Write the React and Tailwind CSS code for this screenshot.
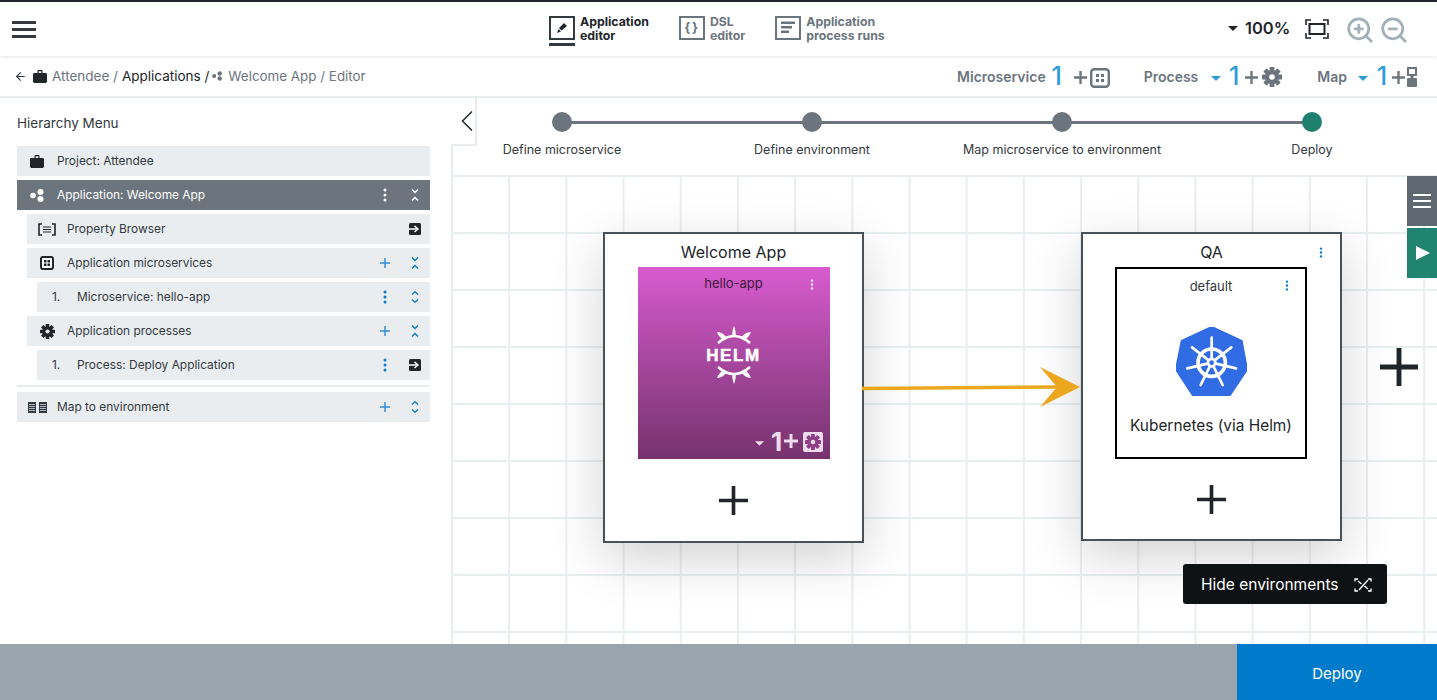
import { ArrowLeft, ZoomIn, ZoomOut } from "lucide-react";

const Caret = ({ className = "" }) => (
  <svg viewBox="0 0 10 5" className={`w-[10px] h-[5px] ${className}`} fill="currentColor">
    <path d="M0 0h10L5 5z" />
  </svg>
);

const Dots = ({ className = "" }) => (
  <svg viewBox="0 0 4 14" className={`w-[4px] h-[14px] ${className}`} fill="currentColor">
    <circle cx="2" cy="2" r="1.5" />
    <circle cx="2" cy="7" r="1.5" />
    <circle cx="2" cy="12" r="1.5" />
  </svg>
);

const Collapse = ({ className = "" }) => (
  <svg viewBox="0 0 8 12" className={`w-[8px] h-[12px] ${className}`} fill="none" stroke="currentColor" strokeWidth="1.4">
    <path d="M1 .5 4 3.5 7 .5M1 11.5 4 8.5 7 11.5" />
  </svg>
);

const Expand = ({ className = "" }) => (
  <svg viewBox="0 0 8 12" className={`w-[8px] h-[12px] ${className}`} fill="none" stroke="currentColor" strokeWidth="1.4">
    <path d="M1 3.5 4 .8 7 3.5M1 8.5 4 11.2 7 8.5" />
  </svg>
);

const Plus = ({ size = 12, width = 2, className = "" }) => (
  <svg viewBox="0 0 28 28" width={size} height={size} className={className} fill="none" stroke="currentColor" strokeWidth={width}>
    <path d="M14 0v28M0 14h28" />
  </svg>
);

// square-toothed cog, the icon sets only have rounder ones
const Gear = ({ size = 14, className = "" }) => (
  <svg viewBox="0 0 20 20" width={size} height={size} className={className} fill="currentColor" fillRule="evenodd">
    {[0, 45, 90, 135].map((a) => (
      <rect key={a} x="7.6" y="0" width="4.8" height="20" rx="0.6" transform={`rotate(${a} 10 10)`} />
    ))}
    <path d="M10 3a7 7 0 1 0 0 14 7 7 0 0 0 0-14Zm0 4.2a2.8 2.8 0 1 1 0 5.6 2.8 2.8 0 0 1 0-5.6Z" />
    <circle cx="10" cy="10" r="2.8" fill="var(--gear-hole, #fff)" />
  </svg>
);

const Briefcase = ({ className = "" }) => (
  <svg viewBox="0 0 14 13" className={`w-[14px] h-[13px] ${className}`} fill="currentColor">
    <path d="M4.5 3V1.2C4.5.5 5 0 5.7 0h2.6c.7 0 1.2.5 1.2 1.2V3H8.3V1.3H5.7V3Z" />
    <rect x="0" y="3" width="14" height="10" rx="1.4" />
  </svg>
);

const GoIcon = () => (
  <svg viewBox="0 0 12 12" className="w-[12px] h-[12px]">
    <rect width="12" height="12" rx="1.5" fill="#212529" />
    <path d="M0 6h7.5M5.5 3 9 6 5.5 9" fill="none" stroke="#fff" strokeWidth="1.5" />
  </svg>
);

const AppIcon = ({ className = "" }) => (
  <svg viewBox="0 0 15 13" className={`w-[15px] h-[13px] ${className}`} fill="currentColor">
    <circle cx="3" cy="6.5" r="2.8" />
    <circle cx="10.5" cy="3" r="3" />
    <circle cx="10.5" cy="10" r="3" />
  </svg>
);

const MicroIcon = ({ className = "" }) => (
  <svg viewBox="0 0 14 14" className={`w-[14px] h-[14px] ${className}`}>
    <rect x="1" y="1" width="12" height="12" rx="2" fill="#fff" stroke="currentColor" strokeWidth="2" />
    <path d="M4 4h2.5v2.5H4zM7.5 4H10v2.5H7.5zM4 7.5h2.5V10H4zM7.5 7.5H10V10H7.5z" fill="currentColor" />
  </svg>
);

const PropertyIcon = () => (
  <svg viewBox="0 0 18 13" className="w-[18px] h-[13px]" fill="none" stroke="#212529" strokeWidth="1.6">
    <path d="M4 1H1v11h3M14 1h3v11h-3" />
    <path d="M5 4h8M5 6.5h8M5 9h8" strokeWidth="1.2" />
  </svg>
);

const MapIcon = () => (
  <svg viewBox="0 0 19 11" className="w-[19px] h-[11px]">
    <rect x="0" y="0" width="8" height="11" fill="#343a40" />
    <rect x="11" y="0" width="8" height="11" fill="#343a40" />
    <path d="M1 2.5h6M1 4.5h6M1 6.5h6M1 8.5h6M12 2.5h6M12 4.5h6M12 6.5h6M12 8.5h6" stroke="#adb5bd" strokeWidth="1" />
  </svg>
);

function Row({ indent = 0, icon, number, label, active, children }) {
  const indents = ["ml-0", "ml-[10px]", "ml-[20px]"];
  return (
    <div
      className={`h-[30px] flex items-center text-[11.9px] ${indents[indent]} ${
        active ? "bg-[#6c757d] text-white" : "bg-[#e9edf0] text-[#343a40]"
      }`}
    >
      {number ? (
        <span className="w-[40px] pl-[15px] shrink-0">{number}</span>
      ) : (
        <span className="w-[40px] flex justify-center shrink-0">{icon}</span>
      )}
      <span className="flex-1">{label}</span>
      {children}
    </div>
  );
}

const RowAction = ({ children, tinted }) => (
  <span className={`w-[30px] h-[30px] flex items-center justify-center ${tinted ? "text-[#0a7cc9]" : ""}`}>{children}</span>
);

const AddAction = () => (
  <span className="w-[30px] h-[30px] flex items-center justify-center">
    <span className="w-[28px] h-[22px] flex items-center justify-center bg-[#ebeced] text-[#2b8ed6]">
      <Plus size={10} width={4} />
    </span>
  </span>
);

function HeaderTab({ icon, lines, active }) {
  return (
    <div className={`flex gap-[5px] items-start ${active ? "text-[#212529]" : "text-[#6c757d]"}`}>
      <div className={`pb-[3px] ${active ? "border-b-[3px] border-[#343a40]" : "border-b-[3px] border-transparent"}`}>
        <div className={`w-[26px] h-[24px] border-[2px] flex items-center justify-center ${active ? "border-[#343a40]" : "border-[#6c757d]"}`}>
          {icon}
        </div>
      </div>
      <div className="text-[12.3px] leading-[14px] font-bold -mt-[1px]">
        {lines.map((l) => (
          <div key={l}>{l}</div>
        ))}
      </div>
    </div>
  );
}

function Step({ label, color, last }) {
  return (
    <div className="w-[250px] relative flex flex-col items-center shrink-0">
      {!last && <div className="absolute top-[9px] left-1/2 w-full h-[3px] bg-[#6c757d]" />}
      <div className={`relative w-[20px] h-[20px] rounded-full ${color}`} />
      <div className="mt-[10px] text-[12.5px] leading-[16px] text-[#343a40]">{label}</div>
    </div>
  );
}

const Count = ({ className = "" }) => (
  <span className={`w-[12px] flex justify-center text-[25px] leading-none font-medium text-[#2d9cdb] ${className}`}>1</span>
);

// one half of the helm wheel: rim arc with three outward spokes
const HelmArc = ({ flip }) => (
  <svg viewBox="0 0 52 18" className={`w-[52px] h-[18px] ${flip ? "rotate-180" : ""}`} fill="#fff">
    <path d="M10 17Q26 3 42 17" fill="none" stroke="#fff" strokeWidth="2.600" />
    <path d="M26 0c1 2.500 1.800 5 1.800 11h-3.600C24.200 5 25 2.500 26 0Z" />
    <path d="M9 6c4 .2 8 2.500 10 6.500l-3 2C13 12.500 10.500 10 9 6Z" />
    <path d="M43 6c-4 .2-8 2.500-10 6.500l3 2C39 12.500 41.500 10 43 6Z" />
  </svg>
);

const KubeIcon = () => (
  <svg viewBox="438 293 213 207" className="w-[71px] h-[69px]">
    <path d="M545 293 635 335 651 420 598 500H490L438 420 455 335Z" fill="#326ce5" stroke="#326ce5" strokeWidth="6" strokeLinejoin="round" />
    <circle cx="545" cy="400" r="41" fill="none" stroke="#fff" strokeWidth="11" />
    <g stroke="#fff" strokeWidth="8" strokeLinecap="round">
      <path d="M545 400V325" />
      <path d="M545 400 604 354" />
      <path d="M545 400 618 417" />
      <path d="M545 400 578 467" />
      <path d="M545 400 512 467" />
      <path d="M545 400 472 417" />
      <path d="M545 400 486 354" />
    </g>
    <circle cx="545" cy="400" r="15" fill="#fff" />
    <circle cx="545" cy="400" r="7" fill="#326ce5" />
  </svg>
);

const cardClass =
  "absolute top-[57px] w-[261px] bg-white border-[2px] border-[#495057] flex flex-col items-center shadow-[0_1rem_3rem_rgba(0,0,0,0.175)]";

export default function App() {
  return (
    <div className="h-screen w-full overflow-hidden flex flex-col bg-white font-['Inter',sans-serif] text-[#212529]">
      {/* top bar */}
      <header className="relative z-20 h-[56px] shrink-0 border-t-[2px] border-[#212529] bg-white shadow-[0_1px_4px_rgba(0,0,0,0.1)] flex items-center px-[12px]">
        <div className="flex flex-col gap-[4px] w-[24px]">
          <div className="h-[3px] bg-[#343a40]" />
          <div className="h-[3px] bg-[#343a40]" />
          <div className="h-[3px] bg-[#343a40]" />
        </div>
        <div className="ml-[513px] flex gap-[30px] mt-[3px]">
          <HeaderTab
            active
            lines={["Application", "editor"]}
            icon={
              <svg viewBox="0 0 12 12" className="w-[12px] h-[12px]" fill="#212529">
                <path d="M8 1l3 3-5.5 4.5L3 6zM2.500 7 5 9.500 1 11z" />
              </svg>
            }
          />
          <HeaderTab
            lines={["DSL", "editor"]}
            icon={<span className="text-[13px] font-bold leading-none tracking-[1.5px]">{"{}"}</span>}
          />
          <HeaderTab
            lines={["Application", "process runs"]}
            icon={
              <svg viewBox="0 0 16 13" className="w-[16px] h-[13px]" fill="#6c757d">
                <path d="M1 .5h14v2.500H1zM1 5h11v2.500H1zM1 9.500h8V12H1z" />
              </svg>
            }
          />
        </div>
        <div className="ml-auto flex items-center mr-[16px] -mt-[1px]">
          <Caret className="text-[#212529]" />
          <span className="ml-[7px] w-[45px] text-[16.5px] font-semibold whitespace-nowrap">100%</span>
          <svg viewBox="0 0 24 20" className="ml-[15px] w-[24px] h-[20px]" fill="none" stroke="#212529">
            <path d="M1 6V1h5M18 1h5v5M23 14v5h-5M6 19H1v-5" strokeWidth="1.6" />
            <rect x="4.500" y="5" width="15" height="10" strokeWidth="2" />
          </svg>
          <ZoomIn size={30} strokeWidth={2.2} className="ml-[16px] mt-[2px] text-[#a3b0b7]" />
          <ZoomOut size={30} strokeWidth={2.2} className="ml-[4px] mt-[2px] text-[#a3b0b7]" />
        </div>
      </header>

      {/* breadcrumb + counters */}
      <div className="h-[40px] shrink-0 flex items-center pl-[14px] pr-[20px]">
        <ArrowLeft size={13} strokeWidth={2} className="text-[#343a40]" />
        <Briefcase className="ml-[6px] text-[#212529]" />
        <span className="ml-[5px] text-[13.5px] text-[#6c757d]">Attendee /</span>
        <span className="ml-[4px] text-[13.5px] text-[#212529]">Applications /</span>
        <AppIcon className="ml-[3px] !w-[11px] !h-[10px] text-[#6c757d]" />
        <span className="ml-[5px] text-[13.4px] text-[#6c757d]">Welcome App / Editor</span>

        <div className="ml-auto flex items-center text-[#6c757d]">
          <span className="text-[14px] font-semibold">Microservice</span>
          <Count className="ml-[5px]" />
          <Plus size={13} width={5} className="ml-[11px] mt-[3px]" />
          <svg viewBox="0 0 20 20" className="ml-[3px] w-[20px] h-[20px] mt-[3px]">
            <rect x="1.200" y="1.200" width="17.600" height="17.600" rx="3" fill="none" stroke="#6c757d" strokeWidth="2.400" />
            <path d="M6 6h3v3H6zM11 6h3v3h-3zM6 11h3v3H6zM11 11h3v3h-3z" fill="#6c757d" />
          </svg>
          <span className="ml-[34px] text-[14px] font-semibold">Process</span>
          <Caret className="ml-[13px] mt-[4px] text-[#2d9cdb]" />
          <Count className="ml-[7px]" />
          <Plus size={13} width={5} className="ml-[5px] mt-[3px]" />
          <Gear size={20} className="ml-[4px] mt-[2px] [--gear-hole:#fff]" />
          <span className="ml-[35px] text-[14px] font-semibold">Map</span>
          <Caret className="ml-[11px] mt-[4px] text-[#2d9cdb]" />
          <Count className="ml-[8px]" />
          <Plus size={13} width={5} className="ml-[4px] mt-[3px]" />
          <svg viewBox="0 0 10 20" className="ml-[2px] w-[10px] h-[20px] mt-[2px]">
            <rect x="1" y="1" width="8" height="7" fill="none" stroke="#6c757d" strokeWidth="2" />
            <rect x="3.500" y="8" width="3" height="3" fill="#6c757d" />
            <rect x="0" y="11" width="10" height="9" rx="1" fill="#6c757d" />
          </svg>
        </div>
      </div>

      {/* main */}
      <div className="relative flex-1 min-h-0 flex border-t-[2px] border-[#e9ecef]">
        <aside className="w-[451px] shrink-0 pl-[17px] pr-[21px]">
          <div className="h-[48px] flex items-center text-[13.5px] text-[#343a40] pt-[2px]">Hierarchy Menu</div>
          <div className="flex flex-col gap-[4px]">
            <Row icon={<Briefcase className="text-[#212529]" />} label="Project: Attendee" />
            <Row active icon={<AppIcon />} label="Application: Welcome App">
              <RowAction><Dots /></RowAction>
              <RowAction><Collapse /></RowAction>
            </Row>
            <Row indent={1} icon={<PropertyIcon />} label="Property Browser">
              <RowAction><GoIcon /></RowAction>
            </Row>
            <Row indent={1} icon={<MicroIcon className="text-[#212529]" />} label="Application microservices">
              <AddAction />
              <RowAction tinted><Collapse /></RowAction>
            </Row>
            <Row indent={2} number="1." label="Microservice: hello-app">
              <RowAction tinted><Dots /></RowAction>
              <RowAction tinted><Expand /></RowAction>
            </Row>
            <Row indent={1} icon={<Gear size={15} className="text-[#212529] [--gear-hole:#e9edf0]" />} label="Application processes">
              <AddAction />
              <RowAction tinted><Collapse /></RowAction>
            </Row>
            <Row indent={2} number="1." label="Process: Deploy Application">
              <RowAction tinted><Dots /></RowAction>
              <RowAction><GoIcon /></RowAction>
            </Row>
          </div>
          <div className="h-[2px] bg-[#e9ecef] mt-[5px] mb-[5px]" />
          <Row icon={<MapIcon />} label="Map to environment">
            <AddAction />
            <RowAction tinted><Expand /></RowAction>
          </Row>
        </aside>

        {/* collapse tab */}
        <div className="absolute z-10 left-[451px] top-0 w-[26px] h-[48px] bg-white border-r-[2px] border-b-[2px] border-[#e9ecef] flex items-center justify-end pr-[2px]">
          <svg viewBox="0 0 12 20" className="w-[12px] h-[20px]" fill="none" stroke="#212529" strokeWidth="1.5">
            <path d="M11 .5 1.500 10 11 19.500" />
          </svg>
        </div>

        <div className="flex-1 min-w-0 flex flex-col">
          {/* stepper */}
          <div className="h-[77px] shrink-0 border-l-[2px] border-[#e9ecef] pt-[14px]">
            <div className="flex -ml-[16px]">
              <Step label="Define microservice" color="bg-[#6c757d]" />
              <Step label="Define environment" color="bg-[#6c757d]" />
              <Step label="Map microservice to environment" color="bg-[#6c757d]" />
              <Step label="Deploy" color="bg-[#20806e]" last />
            </div>
          </div>

          {/* canvas */}
          <div className="relative flex-1 min-h-0 overflow-hidden bg-white bg-[linear-gradient(to_right,#e9eef1_2px,transparent_2px),linear-gradient(to_bottom,#e9eef1_2px,transparent_2px)] bg-[size:57.2px_57px]">
            <div className={`${cardClass} left-[152px] h-[311px]`}>
              <div className="h-[33px] flex items-center text-[16px] pt-[3px]">Welcome App</div>
              <div className="w-[192px] h-[192px] flex flex-col items-center bg-gradient-to-b from-[#d85bcf] to-[#76336e]">
                <div className="relative w-full h-[32px] flex justify-center pt-[8px] text-[13px] leading-[16px] text-[#3f1a3b]">
                  hello-app
                  <Dots className="absolute right-[16px] top-[12px] !h-[11px] text-white" />
                </div>
                <div className="mt-[27px] flex flex-col items-center">
                  <HelmArc />
                  <div className="mt-[3px] mb-[2px] text-white text-[17px] leading-[17px] font-bold tracking-[1.6px] [-webkit-text-stroke:0.5px_#fff] font-['Liberation_Sans',sans-serif]">HELM</div>
                  <HelmArc flip />
                </div>
                <div className="mt-auto self-end mb-[4px] mr-[7px] flex items-center text-[#efdcee]">
                  <Caret className="mr-[7px] mt-[3px] !w-[9px]" />
                  <span className="w-[12px] flex justify-center text-[26px] leading-none font-bold">1</span>
                  <Plus size={14} width={6} className="ml-[1px] mb-[3px]" />
                  <span className="ml-[5px] w-[20px] h-[20px] rounded-[2px] bg-[#efdcee] flex items-center justify-center">
                    <Gear size={16} className="text-[#8f3f87] [--gear-hole:#efdcee]" />
                  </span>
                </div>
              </div>
              <div className="flex-1 flex items-center justify-center text-[#212529]">
                <Plus size={29} width={3.500} />
              </div>
            </div>

            <div className={`${cardClass} left-[630px] h-[309px]`}>
              <div className="relative w-full h-[33px] flex items-center justify-center text-[16px] pt-[3px]">
                QA
                <Dots className="absolute right-[17px] top-[13px] !h-[11px] text-[#0a7cc9]" />
              </div>
              <div className="relative self-start ml-[32px] w-[192px] h-[192px] border-[2px] border-black flex flex-col items-center">
                <div className="pt-[9px] text-[13px] leading-[16px] text-[#343a40]">default</div>
                <Dots className="absolute right-[16px] top-[11px] !h-[11px] text-[#0a7cc9]" />
                <div className="mt-[33px]"><KubeIcon /></div>
                <div className="mt-[20px] text-[15.4px] leading-[20px] whitespace-nowrap">Kubernetes (via Helm)</div>
              </div>
              <div className="flex-1 flex items-center justify-center">
                <Plus size={29} width={3.500} />
              </div>
            </div>

            {/* arrow between the two nodes */}
            <svg viewBox="0 0 220 44" className="absolute left-[411px] top-[191px] w-[220px] h-[44px]">
              <path d="M0 22.500 200 21" stroke="#eda71f" strokeWidth="3.500" fill="none" />
              <path d="M178 1 218 21 178 41 195 21Z" fill="#eda71f" />
            </svg>

            <Plus size={38} width={3.600} className="absolute left-[929px] top-[173px] text-[#212529]" />

            <div className="absolute right-0 top-[1px] w-[30px] h-[50px] bg-[#5f6770] flex flex-col items-center justify-center gap-[4px]">
              <div className="w-[18px] h-[2px] bg-white" />
              <div className="w-[18px] h-[2px] bg-white" />
              <div className="w-[18px] h-[2px] bg-white" />
            </div>
            <div className="absolute right-0 top-[53px] w-[30px] h-[50px] bg-[#20846f] flex items-center justify-center">
              <svg viewBox="0 0 14 14" className="w-[14px] h-[14px] ml-[2px]" fill="#fff"><path d="M0 0 14 7 0 14z" /></svg>
            </div>

            <div className="absolute left-[732px] top-[389px] w-[204px] h-[40px] rounded-[3px] bg-[#0f1214] text-white flex items-center pl-[18px] pt-[1px] text-[15.5px]">
              Hide environments
              <svg viewBox="0 0 18 14" className="ml-[15px] w-[18px] h-[14px]" fill="none" stroke="#fff" strokeWidth="1.3">
                <path d="M1 3.500V1h3M14 1h3v2.500M17 10.500V13h-3M4 13H1v-2.500" />
                <path d="M14 2 5 12M4 3l3.500 3M14 11l-3.500-3" strokeWidth="1.400" />
              </svg>
            </div>
          </div>
        </div>
      </div>

      {/* footer */}
      <footer className="relative z-10 h-[56px] shrink-0 bg-[#99a5ac] flex justify-end">
        <div className="w-[200px] bg-[#007bcc] text-white flex items-center justify-center text-[15px] pt-[4px]">Deploy</div>
      </footer>
    </div>
  );
}
